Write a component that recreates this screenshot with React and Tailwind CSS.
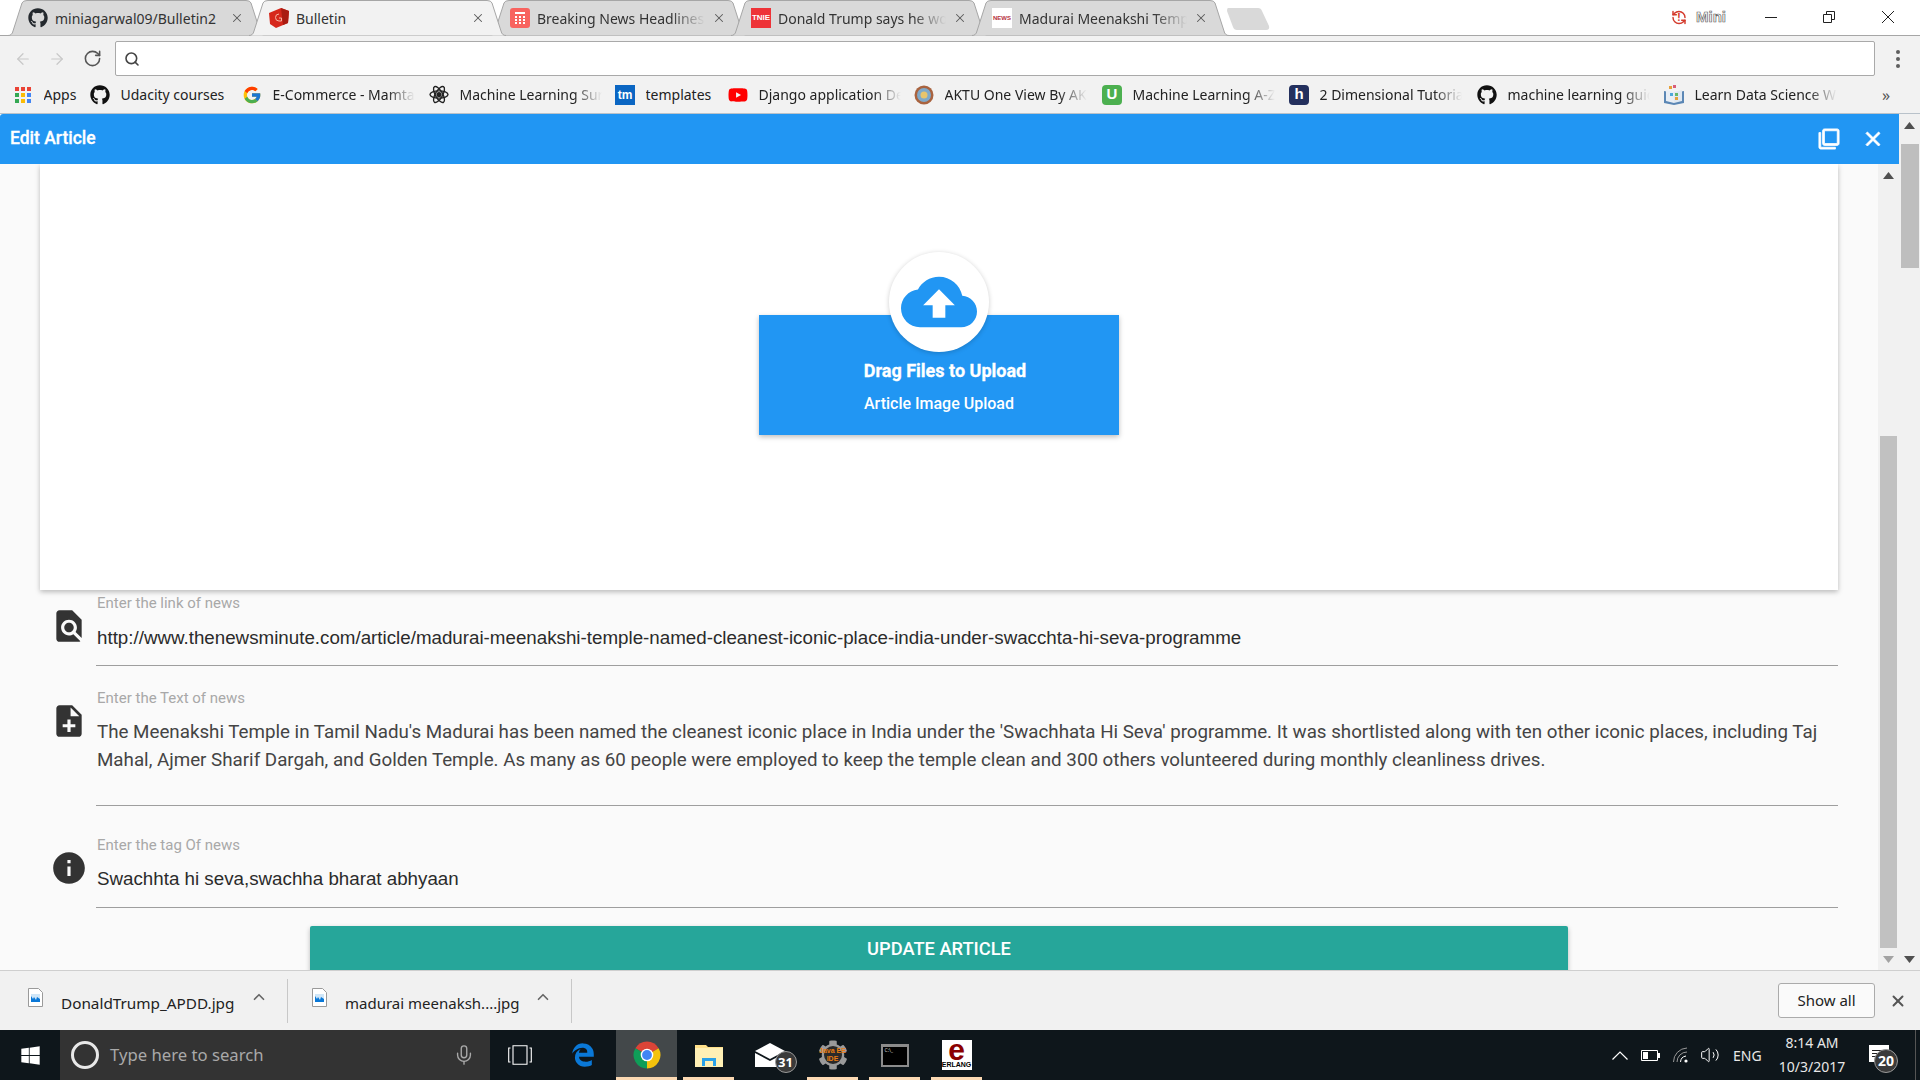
import React from 'react';
import { ArrowLeft, ArrowRight, RotateCw, Search, X, Mic, RefreshCcw, ChevronUp, Volume2 } from 'lucide-react';
import { FaGithub, FaYoutube, FaWindows, FaEdgeLegacy, FaCog } from 'react-icons/fa';
import { FcGoogle } from 'react-icons/fc';

const fade = '[mask-image:linear-gradient(to_right,black_80%,transparent)]';

const tabs = [
  { title: 'miniagarwal09/Bulletin2', full: true, icon: <FaGithub size={20} className="text-[#24292e]" /> },
  { title: 'Bulletin', active: true, full: true, icon: <BulletinIcon /> },
  { title: 'Breaking News Headlines', icon: <NewsGridIcon /> },
  {
    title: 'Donald Trump says he would',
    icon: <span className="w-5 h-5 bg-[#ee3338] text-white text-[8px] font-bold flex items-center justify-center font-['Liberation_Sans',sans-serif]">TNIE</span>,
  },
  {
    title: 'Madurai Meenakshi Temple',
    icon: <span className="w-5 h-5 bg-white text-[#b5303a] text-[6px] font-bold flex items-center justify-center font-['Liberation_Sans',sans-serif]">NEWS</span>,
  },
];

const bookmarks = [
  { title: 'Apps', w: 'w-[77px]', text: 'w-[34px]', icon: <AppsIcon /> },
  { title: 'Udacity courses', w: 'w-[152px]', text: 'w-[110px]', icon: <FaGithub size={20} className="text-[#111]" /> },
  { title: 'E-Commerce - Mamta Store', w: 'w-[187px]', text: 'w-[142px]', cut: true, icon: <FcGoogle size={20} /> },
  { title: 'Machine Learning Survey', w: 'w-[186px]', text: 'w-[142px]', cut: true, icon: <AtomIcon /> },
  {
    title: 'templates', w: 'w-[113px]', text: 'w-[68px]',
    icon: <span className="w-5 h-5 bg-[#0b66c3] text-white text-[12px] font-bold flex items-center justify-center font-['Liberation_Sans',sans-serif]">tm</span>,
  },
  { title: 'Django application Deployment', w: 'w-[186px]', text: 'w-[142px]', cut: true, icon: <FaYoutube size={20} className="text-[#f00]" /> },
  { title: 'AKTU One View By AKTU', w: 'w-[188px]', text: 'w-[142px]', cut: true, icon: <AktuIcon /> },
  {
    title: 'Machine Learning A-Z', w: 'w-[187px]', text: 'w-[142px]', cut: true,
    icon: <span className="w-5 h-5 rounded bg-[#4cb050] text-white text-[15px] font-bold flex items-center justify-center font-['Liberation_Sans',sans-serif]">U</span>,
  },
  {
    title: '2 Dimensional Tutorial', w: 'w-[188px]', text: 'w-[142px]', cut: true,
    icon: <span className="w-5 h-5 rounded-sm bg-[#24305e] text-white text-[15px] font-bold flex items-center justify-center font-['Liberation_Sans',sans-serif]">h</span>,
  },
  { title: 'machine learning guide', w: 'w-[187px]', text: 'w-[142px]', cut: true, icon: <FaGithub size={20} className="text-[#111]" /> },
  { title: 'Learn Data Science With', w: 'w-[187px]', text: 'w-[142px]', cut: true, icon: <BookIcon /> },
];

function BulletinIcon() {
  return (
    <svg width="20" height="20" viewBox="0 0 20 20">
      <path d="M0 5L12 0l8 3-1 12-12 5-6-4z" fill="#d6281c" />
      <path d="M12 0l8 3-1 12-5 2z" fill="#a91c12" />
      <path d="M10 6a3.5 3.5 0 1 0 0 7h2.500v-3H10" fill="none" stroke="#f5b5a5" strokeWidth="1" />
    </svg>
  );
}

function NewsGridIcon() {
  return (
    <svg width="20" height="20" viewBox="0 0 20 20">
      <rect width="20" height="20" rx="3" fill="#f8635f" />
      <rect x="5" y="4" width="10" height="2" fill="#fff" />
      {[8, 11, 14].map(y => [5, 9, 13].map(x => <rect key={`${x}-${y}`} x={x} y={y} width="2" height="2" fill="#fff" />))}
    </svg>
  );
}

function AppsIcon() {
  const colors = ['#ea4335', '#ea4335', '#ea4335', '#34a853', '#fbbc05', '#4285f4', '#34a853', '#fbbc05', '#4285f4'];
  return (
    <span className="grid grid-cols-3 gap-[2px] w-[17px]">
      {colors.map((c, i) => (
        <svg key={i} width="4" height="4"><rect width="4" height="4" fill={c} /></svg>
      ))}
    </span>
  );
}

function AtomIcon() {
  return (
    <svg width="21" height="21" viewBox="0 0 20 20" fill="none" stroke="#222" strokeWidth="1.4">
      <ellipse cx="10" cy="10" rx="9" ry="3.6" />
      <ellipse cx="10" cy="10" rx="9" ry="3.6" transform="rotate(60 10 10)" />
      <ellipse cx="10" cy="10" rx="9" ry="3.6" transform="rotate(120 10 10)" />
      <circle cx="10" cy="10" r="2.6" fill="#222" stroke="none" />
    </svg>
  );
}

function AktuIcon() {
  return (
    <svg width="20" height="20" viewBox="0 0 20 20">
      <circle cx="10" cy="10" r="9.5" fill="#a9633f" />
      <circle cx="10" cy="10" r="7" fill="#7fa9c9" />
      <circle cx="10" cy="10" r="3.5" fill="#e8c56c" />
    </svg>
  );
}

function BookIcon() {
  return (
    <svg width="20" height="20" viewBox="0 0 20 20">
      <path d="M0 6l10 2 10-2v12l-10 2-10-2z" fill="#5b87b5" />
      <path d="M2 5l8 2v11l-8-2z" fill="#e8eef5" />
      <path d="M18 5l-8 2v11l8-2z" fill="#dfe8f2" />
      <rect x="5" y="1" width="3" height="3" fill="#e6a13b" />
      <rect x="9" y="0" width="3" height="3" fill="#d95e7a" />
      <rect x="6" y="8" width="3" height="3" fill="#4fa8d8" />
      <rect x="11" y="8" width="3" height="3" fill="#66b96a" />
      <rect x="11" y="12" width="3" height="3" fill="#e6a13b" />
    </svg>
  );
}

function FileIcon() {
  return (
    <svg width="15" height="19" viewBox="0 0 15 19">
      <path d="M.5.5h10l4 4v14H.5z" fill="#fff" stroke="#9a9a9a" />
      <rect x="3" y="6" width="9" height="8" fill="#0a78d7" />
      <path d="M3 8l2 3 1-2 2 3 1-3 3 2V6H3z" fill="#cfe6f8" />
    </svg>
  );
}

function ChromeIcon() {
  return (
    <svg width="28" height="28" viewBox="0 0 24 24">
      <path d="M12 12L2.04 6.25A11.5 11.5 0 0 1 21.96 6.25Z" fill="#db4437" />
      <path d="M12 12L21.96 6.25A11.5 11.5 0 0 1 12 23.5Z" fill="#f4c20d" />
      <path d="M12 12L12 23.5A11.5 11.5 0 0 1 2.04 6.25Z" fill="#0f9d58" />
      <circle cx="12" cy="12" r="5.4" fill="#fff" />
      <circle cx="12" cy="12" r="4.2" fill="#4285f4" />
    </svg>
  );
}

function TriangleUp({ color = '#505050' }) {
  return <svg width="11" height="7" viewBox="0 0 11 7"><path d="M5.5 0L11 7H0z" fill={color} /></svg>;
}

function TriangleDown({ color = '#505050' }) {
  return <svg width="11" height="7" viewBox="0 0 11 7"><path d="M0 0h11L5.5 7z" fill={color} /></svg>;
}

function Tab({ title, icon, active, full }) {
  return (
    <div className={`relative w-[257px] h-9 -ml-4 first:ml-0 flex items-center shrink-0 ${active ? 'z-10' : ''}`}>
      <svg className="absolute inset-0" width="257" height="36" viewBox="0 0 257 36">
        <path
          d="M0 35.5Q4 35.5 5 31L14 3Q15 .5 19 .5L238 .5Q242 .5 243 3L252 31Q253 35.5 257 35.5"
          fill={active ? '#f2f2f2' : '#d9d9d9'}
          stroke="#a6a6a6"
        />
      </svg>
      <div className="relative flex items-center w-full pl-5">
        <span className="w-5 h-5 flex items-center justify-center shrink-0">{icon}</span>
        <span className={`ml-[7px] w-[168px] overflow-hidden whitespace-nowrap text-[14px] text-[#333] ${full ? '' : fade}`}>{title}</span>
        <X size={14} strokeWidth={1.8} className="ml-[7px] text-[#5a5a5a]" />
      </div>
    </div>
  );
}

function Field({ label, icon, children, height, mt }) {
  return (
    <div className={`flex ml-[50px] mr-[40px] ${mt}`}>
      <div className="w-[46px] shrink-0 mt-[14px]">{icon}</div>
      <div className="flex-1">
        <div className="h-5 leading-5 text-[15px] text-[#a8a8a8] font-['Roboto',sans-serif] pl-px">{label}</div>
        <div className={`border-b border-[#9e9e9e] pl-px ${height}`}>{children}</div>
      </div>
    </div>
  );
}

function MdIcon({ d, size = 38, className = 'text-[#333]', bold }) {
  return (
    <svg width={size} height={size} viewBox="0 0 24 24" fill="currentColor" className={className} stroke={bold ? 'currentColor' : 'none'} strokeWidth={bold ? 0.9 : 0}>
      <path d={d} />
    </svg>
  );
}

function TaskTile({ w, ml = '', mark, tile, children }) {
  return (
    <div className={`relative h-full flex items-center justify-center ${w} ${ml} ${tile ? 'bg-[#43484a]' : ''}`}>
      {children}
      {mark && <div className="absolute left-0 right-0 bottom-0 h-[3px] bg-[#fbd9b3]" />}
    </div>
  );
}

export default function App() {
  return (
    <div className="w-[1920px] h-[1080px] flex flex-col overflow-hidden bg-white font-['Noto_Sans',sans-serif]">
      {/* tab strip */}
      <div className="h-9 shrink-0 relative flex border-b border-[#a6a6a6] pl-2">
        <div className="flex h-9">
          {tabs.map(t => <Tab key={t.title} {...t} />)}
        </div>
        <div className="ml-[-2px] mt-2">
          <svg width="44" height="22" viewBox="0 0 44 22"><path d="M1 0H31Q34 0 35 3L42 18Q43 22 39 22H10Q7 22 6 19L0 3Q0 0 1 0Z" fill="#d9d9d9" /></svg>
        </div>
        <div className="ml-auto flex items-center h-[34px] text-[#444]">
          <span className="relative w-4 h-4 text-[#d43a2c] flex items-center justify-center">
            <RefreshCcw size={17} strokeWidth={2.2} />
            <span className="absolute text-[10px] font-bold leading-none">!</span>
          </span>
          <span className="ml-[9px] w-[30px] text-[15px] font-bold text-white font-['Liberation_Sans',sans-serif] [-webkit-text-stroke:0.7px_#666]">Mini</span>
          <div className="ml-[39px] w-3 h-px bg-[#222]" />
          <svg className="ml-[46px]" width="12" height="12" viewBox="0 0 12 12" fill="none" stroke="#222"><path d="M.5 3.5h8v8h-8zM3.5 3.5v-3h8v8h-3" /></svg>
          <svg className="ml-[47px] mr-[26px]" width="12" height="12" viewBox="0 0 12 12" stroke="#222"><path d="M0 0l12 12M12 0L0 12" /></svg>
        </div>
      </div>

      {/* toolbar */}
      <div className="h-10 shrink-0 bg-[#f2f2f2] flex items-start pt-[5px]">
        <div className="w-[115px] h-[35px] flex items-center shrink-0 pl-[14px]">
          <ArrowLeft size={18} strokeWidth={1.6} className="text-[#c8c8c8]" />
          <ArrowRight size={18} strokeWidth={1.6} className="ml-4 text-[#c8c8c8]" />
          <RotateCw size={19} strokeWidth={2} className="ml-[17px] text-[#555]" />
        </div>
        <div className="w-[1760px] h-[35px] bg-white border border-[#a9a9a9] rounded-[2px] flex items-center pl-2">
          <Search size={16} strokeWidth={2.4} className="text-[#444]" />
        </div>
        <div className="flex-1 h-[35px] flex flex-col items-center justify-center gap-[3px]">
          <svg width="4" height="18" viewBox="0 0 4 18" fill="#5f5f5f"><circle cx="2" cy="2" r="2" /><circle cx="2" cy="9" r="2" /><circle cx="2" cy="16" r="2" /></svg>
        </div>
      </div>

      {/* bookmarks */}
      <div className="h-[38px] shrink-0 bg-[#f2f2f2] border-b border-[#b9c2ca] flex items-center pl-[14px] text-[14px] text-[#222]">
        {bookmarks.map(b => (
          <div key={b.title} className={`flex items-center shrink-0 ${b.w}`}>
            <span className="w-5 h-5 flex items-center justify-center shrink-0 -ml-px">{b.icon}</span>
            <span className={`ml-[10.5px] overflow-hidden whitespace-nowrap ${b.text} ${b.cut ? fade : ''}`}>{b.title}</span>
          </div>
        ))}
        <span className="ml-[30px] text-[16px] text-[#555]">»</span>
      </div>

      {/* page */}
      <div className="flex-1 min-h-0 flex">
        <div className="flex-1 min-w-0 flex flex-col">
          <div className="h-[50px] shrink-0 bg-[#2196f3] flex items-center text-white rounded-tl-[3px]">
            <span className="ml-[10px] -mt-[1px] text-[17.5px] font-medium font-['Roboto',sans-serif] [-webkit-text-stroke:0.3px_white]">Edit Article</span>
            <MdIcon
              size={22}
              bold
              className="ml-auto text-white"
              d="M3 5H1v16c0 1.1.9 2 2 2h16v-2H3V5zm18-4H7c-1.1 0-2 .9-2 2v14c0 1.1.9 2 2 2h14c1.1 0 2-.9 2-2V3c0-1.100-.9-2-2-2zm0 16H7V3h14v14z"
            />
            <MdIcon
              size={24}
              bold
              className="ml-[21px] mr-[14px] text-white"
              d="M19 6.41L17.59 5 12 10.59 6.41 5 5 6.41 10.59 12 5 17.59 6.41 19 12 13.41 17.59 19 19 17.59 13.41 12z"
            />
          </div>

          <div className="flex-1 min-h-0 flex">
            <div className="flex-1 min-w-0 bg-[#fafafa] overflow-hidden">
              {/* upload card */}
              <div className="ml-[40px] w-[1798px] h-[426px] bg-white shadow-[0_2px_5px_rgba(0,0,0,0.26)] flex items-center justify-center">
                <div className="relative w-[360px] h-[120px] mb-[5px] bg-[#2196f3] shadow-[0_2px_5px_rgba(0,0,0,0.26)] text-white font-['Roboto',sans-serif] flex flex-col items-center pt-[44px]">
                  <div className="absolute -top-[63px] left-[130px] w-[100px] h-[100px] rounded-full bg-white shadow-[0_1px_5px_rgba(0,0,0,0.2)] flex items-center justify-center">
                    <MdIcon
                      size={76}
                      className="text-[#2196f3]"
                      d="M19.35 10.04C18.67 6.59 15.64 4 12 4 9.11 4 6.6 5.64 5.35 8.04 2.34 8.36 0 10.91 0 14c0 3.31 2.69 6 6 6h13c2.76 0 5-2.24 5-5 0-2.64-2.05-4.78-4.65-4.96zM14 13v4h-4v-4H7l5-5 5 5h-3z"
                    />
                  </div>
                  <div className="h-6 leading-6 text-[18px] font-bold ml-3 [-webkit-text-stroke:0.3px_white]">Drag Files to Upload</div>
                  <div className="h-6 leading-6 text-[16px] font-medium mt-[9px]">Article Image Upload</div>
                </div>
              </div>

              <div className="pt-[3px]">
                <Field
                  label="Enter the link of news"
                  height="h-[53px]"
                  icon={<MdIcon d="M20 19.59V8l-6-6H6c-1.1 0-1.99.9-1.99 2L4 20c0 1.1.89 2 1.99 2H18c.45 0 .85-.15 1.19-.4l-4.43-4.43c-.8.52-1.74.83-2.76.83-2.76 0-5-2.24-5-5s2.24-5 5-5 5 2.24 5 5c0 1.02-.31 1.96-.83 2.75L20 19.59zM9 13c0 1.66 1.34 3 3 3s3-1.34 3-3-1.34-3-3-3-3 1.34-3 3z" />}
                >
                  <div className="leading-[49px] text-[18.75px] text-[#2b2b2b] font-['Liberation_Sans',sans-serif] whitespace-nowrap">
                    http://www.thenewsminute.com/article/madurai-meenakshi-temple-named-cleanest-iconic-place-india-under-swacchta-hi-seva-programme
                  </div>
                </Field>
                <Field
                  label="Enter the Text of news"
                  mt="mt-[22px]"
                  height="h-[98px] pt-[10px]"
                  icon={<MdIcon d="M14 2H6c-1.1 0-1.99.9-1.99 2L4 20c0 1.1.89 2 1.99 2H18c1.1 0 2-.9 2-2V8l-6-6zm2 14h-3v3h-2v-3H8v-2h3v-3h2v3h3v2zm-3-7V3.5L18.5 9H13z" />}
                >
                  <div className="leading-[28px] text-[18.75px] text-[#444] font-['Roboto',sans-serif]">
                    The Meenakshi Temple in Tamil Nadu's Madurai has been named the cleanest iconic place in India under the 'Swachhata Hi Seva' programme. It was shortlisted along with ten other iconic places, including Taj Mahal, Ajmer Sharif Dargah, and Golden Temple. As many as 60 people were employed to keep the temple clean and 300 others volunteered during monthly cleanliness drives.
                  </div>
                </Field>
                <Field
                  label="Enter the tag Of news"
                  mt="mt-[29px]"
                  height="h-[53px]"
                  icon={<MdIcon d="M12 2C6.48 2 2 6.48 2 12s4.48 10 10 10 10-4.48 10-10S17.52 2 12 2zm1 15h-2v-6h2v6zm0-8h-2V7h2v2z" />}
                >
                  <div className="leading-[47px] text-[18.75px] text-[#2b2b2b] font-['Liberation_Sans',sans-serif]">Swachhta hi seva,swachha bharat abhyaan</div>
                </Field>
              </div>

              <div className="mt-[18px] ml-[310px] w-[1258px] h-[46px] bg-[#26a69a] rounded-t-[2px] shadow-[0_2px_5px_rgba(0,0,0,0.26)] flex items-center justify-center text-white text-[18.3px] font-medium font-['Roboto',sans-serif]">
                UPDATE ARTICLE
              </div>
            </div>

            {/* inner scrollbar */}
            <div className="w-[21px] shrink-0 bg-[#f1f1f1] flex flex-col items-center">
              <div className="h-6 flex items-center justify-center"><TriangleUp /></div>
              <div className="mt-[248px] w-[17px] h-[513px] bg-[#c1c1c1]" />
              <div className="mt-auto h-[22px] flex items-center justify-center"><TriangleDown color="#a3a3a3" /></div>
            </div>
          </div>
        </div>

        {/* outer scrollbar */}
        <div className="w-[21px] shrink-0 bg-[#f1f1f1] flex flex-col items-center">
          <div className="h-[22px] flex items-center justify-center"><TriangleUp /></div>
          <div className="mt-2 w-[18px] h-[124px] bg-[#bebebe]" />
          <div className="mt-auto h-[22px] flex items-center justify-center"><TriangleDown /></div>
        </div>
      </div>

      {/* download shelf */}
      <div className="h-[60px] shrink-0 bg-[#f1f1f1] border-t border-[#cfcfcf] flex items-center text-[15px] text-[#222]">
        <div className="w-[288px] h-[44px] border-r border-[#c8c8c8] flex items-center pl-[28px]">
          <span className="-mt-[7px]"><FileIcon /></span>
          <span className="ml-[18px] mt-[5px] w-[175px] text-[15.3px] whitespace-nowrap">DonaldTrump_APDD.jpg</span>
          <ChevronUp size={18} strokeWidth={2.2} className="ml-[14px] -mt-[7px] text-[#666]" />
        </div>
        <div className="w-[284px] h-[44px] border-r border-[#c8c8c8] flex items-center pl-[24px]">
          <span className="-mt-[7px]"><FileIcon /></span>
          <span className="ml-[18px] mt-[5px] w-[174px] whitespace-nowrap">madurai meenaksh....jpg</span>
          <ChevronUp size={18} strokeWidth={2.2} className="ml-[15px] -mt-[7px] text-[#666]" />
        </div>
        <div className="ml-auto w-[97px] h-[35px] bg-[#fafafa] border border-[#ababab] rounded-[3px] flex items-center justify-center">Show all</div>
        <X size={18} strokeWidth={2.6} className="ml-[14px] mr-[13px] text-[#555]" />
      </div>

      {/* taskbar */}
      <div className="h-[50px] shrink-0 bg-[#0e161b] flex items-center text-white">
        <div className="w-[60px] h-full flex items-center justify-center"><FaWindows size={21} /></div>
        <div className="w-[430px] h-full bg-[#333] flex items-center pl-[11px]">
          <span className="w-7 h-7 rounded-full border-[3px] border-[#e8e8e8]" />
          <span className="ml-[11px] text-[16.7px] text-[#a9a9a9]">Type here to search</span>
          <Mic size={22} strokeWidth={1.5} className="ml-auto mr-[15px] text-[#a9a9a9]" />
        </div>
        <TaskTile w="w-[60px]">
          <svg width="24" height="20" viewBox="0 0 24 20" fill="none" stroke="#fff" strokeWidth="1.1">
            <path d="M5 .7h14v18.6H5zM2.500 3H.7v14h1.800M21.500 3h1.800v14h-1.800" />
          </svg>
        </TaskTile>
        <TaskTile w="w-[66px]"><FaEdgeLegacy size={24} className="text-[#0a78d7]" /></TaskTile>
        <TaskTile w="w-[61px]" tile mark><ChromeIcon /></TaskTile>
        <TaskTile w="w-[51px]" ml="ml-[6px]" mark>
          <svg width="28" height="24" viewBox="0 0 28 24">
            <path d="M0 2h11l2 2h15v20H0z" fill="#ffe08a" />
            <path d="M0 5h28v19H0z" fill="#fff0b5" />
            <path d="M7 23v-8h14v8h-3v-5h-8v5z" fill="#2aa1e8" />
          </svg>
        </TaskTile>
        <TaskTile w="w-[73px]">
          <div className="relative -translate-x-[1px]">
            <svg width="30" height="24" viewBox="0 0 30 24">
              <path d="M0 8L15 0l15 8-15 8z" fill="#fff" />
              <path d="M0 10l15 8 15-8v14H0z" fill="#fff" />
            </svg>
            <div className="absolute -right-[12px] -bottom-[6px] w-[22px] h-[22px] rounded-full bg-[#3a3a3a] border border-[#999] flex items-center justify-center text-[13px] font-bold leading-none">31</div>
          </div>
        </TaskTile>
        <TaskTile w="w-[51px]" mark>
          <div className="relative flex items-center justify-center">
            <FaCog size={30} className="text-[#9a9a9a]" />
            <div className="absolute w-[18px] h-[18px] rounded-full bg-[#2a2a2a]" />
            <div className="absolute text-[7px] leading-[8px] text-center font-bold text-[#e87d12] font-['Liberation_Sans',sans-serif] whitespace-nowrap">Java EE<br />IDE</div>
          </div>
        </TaskTile>
        <TaskTile w="w-[51px]" ml="ml-[11px]" mark>
          <div className="w-7 h-[23px] bg-black border-2 border-[#8b8b8b] border-t-[3px] text-[5px] leading-[6px] text-[#ccc] pl-[2px]">C:\_</div>
        </TaskTile>
        <TaskTile w="w-[51px]" ml="ml-[11px]" mark>
          <div className="w-[30px] h-[30px] bg-white flex flex-col items-center">
            <div className="w-full h-[20px] overflow-hidden text-[#8b0000] text-[30px] leading-[20px] font-bold text-center font-['Liberation_Sans',sans-serif]">e</div>
            <div className="text-[7px] leading-[10px] font-bold text-black font-['Liberation_Sans',sans-serif]">ERLANG</div>
          </div>
        </TaskTile>

        <div className="ml-auto h-full flex items-center">
          <svg width="16" height="9" viewBox="0 0 16 9" fill="none" stroke="#fff" strokeWidth="1.2"><path d="M.5 8.5L8 1l7.5 7.5" /></svg>
          <svg className="ml-[13px]" width="19" height="11" viewBox="0 0 19 11" fill="none" stroke="#fff">
            <path d="M.5.5h16v10H.5z" />
            <rect x="2" y="2" width="5" height="7" fill="#fff" stroke="none" />
            <rect x="17" y="3" width="2" height="5" fill="#fff" stroke="none" />
          </svg>
          <svg className="ml-[13px]" width="16" height="16" viewBox="0 0 16 16" fill="none" stroke="#999">
            <path d="M.5 15A14 14 0 0 1 14 1M4 15A10 10 0 0 1 14 5" />
            <path d="M7.5 15A6.5 6.5 0 0 1 13 9" stroke="#fff" />
            <circle cx="13" cy="14" r="1.6" fill="#fff" stroke="none" />
          </svg>
          <Volume2 size={20} strokeWidth={1.2} className="ml-[11px] text-white" />
          <span className="ml-[13px] w-[29px] text-[14px] text-[#e8e8e8]">ENG</span>
          <div className="ml-[10px] w-[80px] text-center text-[14px] leading-[24px] text-[#e8e8e8]">
            <div>8:14 AM</div>
            <div>10/3/2017</div>
          </div>
          <div className="relative ml-[17px] w-5 h-[17px] bg-white flex flex-col justify-center gap-[2px] px-[3px] -mt-[3px]">
            <div className="h-px bg-[#222]" />
            <div className="h-px bg-[#222]" />
            <div className="h-px bg-[#222]" />
            <div className="absolute -right-[9px] -bottom-[11px] w-6 h-6 rounded-full bg-[#3a3a3a] border border-[#999] flex items-center justify-center text-[14px] font-bold leading-none">20</div>
          </div>
          <div className="ml-[26px] mr-[4px] w-px h-full bg-[#555]" />
        </div>
      </div>
    </div>
  );
}
